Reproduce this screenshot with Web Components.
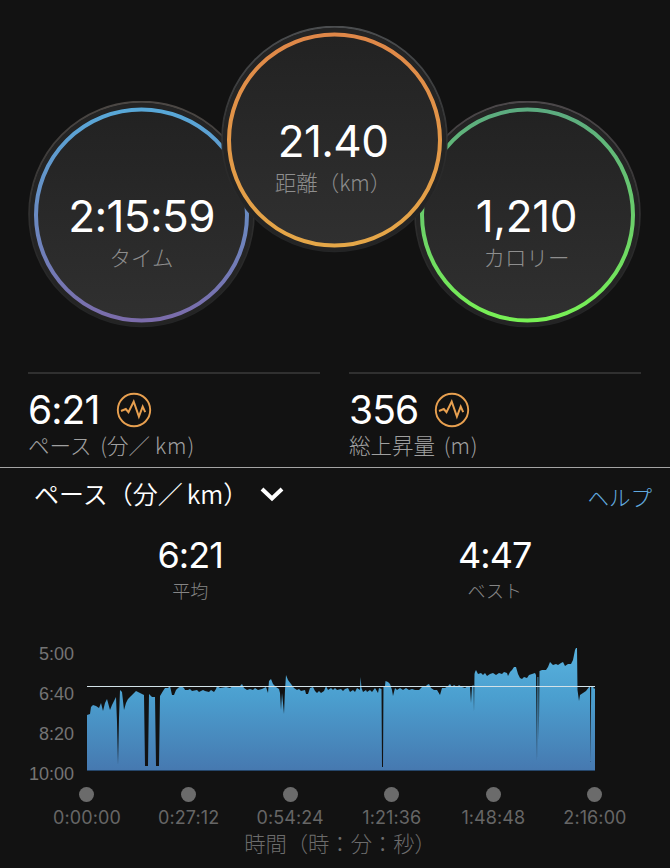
<!DOCTYPE html>
<html lang="ja">
<head>
<meta charset="utf-8">
<title>アクティビティ</title>
<style>
    body {
        margin: 0;
        background: #121212;
        color: #fff;
        font-family: Inter, "Noto Sans CJK JP", sans-serif;
    }
</style>
</head>
<body>
<activity-page></activity-page>

<script>
// shared helper: attach an open root and fill it
function render(el, html) {
    const shadow = el.attachShadow({mode: 'open'});
    const template = document.createElement('template');
    template.innerHTML = html;
    shadow.append(template.content.cloneNode(true));
}

class StatDial extends HTMLElement {
    connectedCallback() {
        const from = this.getAttribute('data-from');
        const to = this.getAttribute('data-to');
        const rim = this.getAttribute('data-rim');
        render(this, `
<style>
    :host{
        display:grid;
        width:227px;
        height:227px;
        flex:none;
    }
    svg, .content{grid-area:1 / 1;}
    .content{
        display:flex;
        flex-direction:column;
        align-items:center;
        padding:90px var(--nudge, 0) 0 0;
        z-index:1;
    }
    .value{
        font-size:44px;
        font-weight:385;
        line-height:50px;
        letter-spacing:var(--value-spacing, -0.6px);
        white-space:nowrap;
    }
    .label{
        font-family:"Noto Sans CJK JP", sans-serif;
        font-weight:300;
        font-size:21.5px;
        line-height:30px;
        margin-top:1px;
        color:#8e8e8e;
        white-space:nowrap;
    }
</style>
<svg width="227" height="227" viewBox="0 0 227 227">
    <defs>
        <linearGradient id="ring" x1="0" y1="0" x2="0" y2="1">
            <stop offset="0" stop-color="${from}"/>
            <stop offset="1" stop-color="${to}"/>
        </linearGradient>
        <linearGradient id="rim" x1="0" y1="0" x2="0" y2="1">
            <stop offset="0" stop-color="${rim}"/>
            <stop offset=".6" stop-color="#2b2b2b"/>
            <stop offset="1" stop-color="#242526"/>
        </linearGradient>
        <linearGradient id="face" x1="0" y1="0" x2="0" y2="1">
            <stop offset="0" stop-color="#222"/>
            <stop offset="1" stop-color="#303030"/>
        </linearGradient>
    </defs>
    <circle cx="113.5" cy="113" r="112.3" fill="#202122" stroke="url(#rim)" stroke-width="2"/>
    <circle cx="113.5" cy="113.5" r="109.5" fill="none" stroke="#242424" stroke-width="4"/>
    <circle cx="113.5" cy="114" r="105.5" fill="url(#face)" stroke="url(#ring)" stroke-width="4"/>
</svg>
<div class="content">
    <div class="value"><slot name="value"></slot></div>
    <div class="label"><slot></slot></div>
</div>
`);
    }
}

class PulseIcon extends HTMLElement {
    connectedCallback() {
        render(this, `
<style>
    :host{display:block;width:36px;height:36px;}
    svg{display:block;}
</style>
<svg width="36" height="36" viewBox="0 0 36 36" fill="none" stroke="#e8a050">
    <circle cx="18" cy="18" r="16.2" stroke-width="1.9"/>
    <path d="M5 19 L9.8 17 L12.5 20.2 L17.7 9.5 L22.9 24.6 L26.7 14.7 L29.2 20.2" stroke-width="2"/>
</svg>
`);
    }
}

class MetricItem extends HTMLElement {
    connectedCallback() {
        render(this, `
<style>
    :host{
        display:block;
        flex:1;
        border-top:2px solid #303030;
        height:95px;
        box-sizing:border-box;
        white-space:nowrap;
    }
    .row{
        display:flex;
        align-items:center;
        height:46px;
        margin-top:13px;
    }
    .value{
        width:var(--value-width);
        font-size:39px;
        font-weight:385;
        line-height:46px;
        letter-spacing:-0.9px;
    }
    .label{
        font-family:"Noto Sans CJK JP", sans-serif;
        font-weight:300;
        font-size:21.5px;
        line-height:28px;
        margin-top:-2px;
        word-spacing:4px;
        color:#a0a0a0;
    }
</style>
<div class="row">
    <div class="value"><slot name="value"></slot></div>
    <pulse-icon></pulse-icon>
</div>
<div class="label"><slot></slot></div>
`);
    }
}

class SummaryValue extends HTMLElement {
    connectedCallback() {
        render(this, `
<style>
    :host{
        display:flex;
        flex-direction:column;
        align-items:center;
        flex:1;
    }
    .value{
        font-size:36px;
        font-weight:385;
        line-height:44px;
        letter-spacing:-0.9px;
    }
    .label{
        font-family:"Noto Sans CJK JP", sans-serif;
        font-weight:300;
        font-size:18px;
        line-height:26px;
        color:#858585;
    }
</style>
<div class="value"><slot name="value"></slot></div>
<div class="label"><slot></slot></div>
`);
    }
}

class PaceChart extends HTMLElement {
    connectedCallback() {
        const ticks = this.getAttribute('data-ticks').split(' ');
        const levels = this.getAttribute('data-levels').split(' ');
        // x,y pairs of the pace curve
        const curve = `87,715 90,714 91,707 93,705 96,706 99,708 101,703 103,711 105,703 107,699
            110,710 112,705 114,701 116,697 117,722 118,765 119,718 120,690 122,692 124,710 126,703
            128,699 131,696 136,691 140,693 144,695 145,766 148,766 149,694 152,697 155,697 156,766
            159,766 160,696 163,691 165,688 168,688 170,686 172,695 174,695 176,690 178,688 181,686
            184,688 185,690 188,690 190,689 192,691 197,690 199,692 203,690 205,691 209,692 211,690
            214,692 216,689 217,686 220,688 226,687 230,688 233,686 236,687 239,687 242,684 244,688
            247,690 250,689 253,690 255,688 258,690 262,689 266,687 268,693 269,681 271,679 273,684
            276,687 279,689 280,693 281,710 282,693 283,703 284,714 285,690 286,675 288,680 291,684
            294,688 297,690 299,689 301,691 305,690 306,694 308,694 310,688 313,687 315,691 317,693
            319,691 321,693 324,691 326,686 328,690 331,688 333,690 335,688 337,690 341,689 343,691
            345,689 348,688 350,692 353,690 355,692 357,688 360,690 360.5,677 361.5,688 363,692
            366,690 367,692 370,690 372,692 375,688 378,693 379,688 381.5,689 382,767 383,767
            383.5,686 385,686 385.5,681 388,682 390,684 392,690 393,696 395,688 397,690 400,688
            403,690 406,688 409,690 412,689 415,690 419,690 422,687 425,687 427,685 429,684 431,688
            434,690 437,690 440,695 442,688 445,688 448,686 450,684 452,687 454,685 457,687 459,685
            462,687 465,688 468,686 470,687 471,703 472,686 473.5,685 474,712 474.5,674 475,672
            476,670 478,674 481,673 483,675 485,673 487,676 490,674 493,673 496,675 499,673 502,674
            504,672 507,673 508,676 510,672 512,670 514,667 516,667 518,674 520,678 522,679 524,677
            527,678 529,675 532,674 535,673 536,675 537,762 537.5,677 538.3,677 538.8,740 539.5,671
            542,670 546,670 548,667 550,662 553,665 556,664 558,665 561,663 563,662 565,666 568,664
            571,664 573,660 574,655 575,650 576,648 577,648 577.5,690 579,701 580,695 583,693
            586,691 589,687 590,687 590.5,762 591.2,687 593,686 594,689 595,688`;
        render(this, `
<style>
    :host{display:block;}
    .plot{
        display:grid;
        grid-template-columns:74px 508px;
        column-gap:13px;
    }
    .levels{
        display:flex;
        flex-direction:column;
        justify-content:space-between;
        height:140px;
        margin-top:4px;
        text-align:right;
        font:18px/20px "Liberation Sans", sans-serif;
        color:#747474;
    }
    svg{display:block;}
    .ticks{
        display:grid;
        grid-template-columns:repeat(6, 101.6px);
        margin:3px 0 0 36.2px;
        justify-items:center;
    }
    .tick{
        display:flex;
        flex-direction:column;
        align-items:center;
        font-size:18px;
        line-height:22px;
        letter-spacing:.1px;
        color:#666;
    }
    .tick::before{
        content:"";
        width:15px;
        height:15px;
        margin-bottom:5px;
        border-radius:50%;
        background:#6b6b6b;
    }
    .caption{
        padding-left:10px;
        text-align:center;
        font-family:"Noto Sans CJK JP", sans-serif;
        font-weight:300;
        font-size:21.3px;
        line-height:28px;
        color:#6c6c6c;
    }
</style>
<div class="plot">
    <div class="levels">${levels.map(l => `<span>${l}</span>`).join('')}</div>
    <svg width="508" height="131" viewBox="87 640 508 131">
        <defs>
            <linearGradient id="fill" gradientUnits="userSpaceOnUse" x1="0" y1="648" x2="0" y2="770">
                <stop offset="0" stop-color="#58b2de"/>
                <stop offset=".4" stop-color="#4b9fcf"/>
                <stop offset="1" stop-color="#4679b0"/>
            </linearGradient>
        </defs>
        <polygon points="87,770 ${curve} 595,770" fill="url(#fill)"/>
        <path d="M87 770.5H595" stroke="#25466a"/>
        <path d="M87 686.5H595" stroke="#d3e2e8" stroke-width="1.2"/>
    </svg>
</div>
<div class="ticks">${ticks.map(t => `<div class="tick">${t}</div>`).join('')}</div>
<div class="caption"><slot></slot></div>
`);
    }
}

class ActivityPage extends HTMLElement {
    connectedCallback() {
        render(this, `
<style>
    :host{
        display:block;
        width:670px;
        height:868px;
        overflow:hidden;
    }
    .dials{
        display:flex;
        align-items:flex-end;
        height:302px;
        padding:26px 0 0 28px;
    }
    stat-dial + stat-dial{margin-left:-34px;}
    .raised{z-index:1;align-self:flex-start;}
    .metrics{
        display:flex;
        gap:29px;
        padding:0 29px 0 28px;
        margin-top:44px;
        border-bottom:1px solid #a4a4a4;
    }
    .unit{margin-left:var(--unit-gap, 0);letter-spacing:.9px;}
    .heading{
        display:flex;
        align-items:center;
        height:52px;
        padding:0 18px 0 34px;
        font-family:"Noto Sans CJK JP", sans-serif;
        white-space:nowrap;
    }
    .heading h2{
        margin:0;
        font-size:25px;
        font-weight:350;
        line-height:34px;
        padding-bottom:2px;
    }
    .heading svg{margin-left:12px;}
    .heading a{
        margin-left:auto;
        padding-top:4px;
        font-size:21.5px;
        font-weight:300;
        color:#61a9df;
    }
    .summary{
        display:flex;
        width:609px;
        margin:13px 0 0 38px;
    }
    pace-chart{margin-top:37px;}
</style>
<div class="dials">
    <stat-dial data-from="#58a8d8" data-to="#7b6cab" data-rim="#4c4845"><span slot="value">2:15:59</span>タイム</stat-dial>
    <stat-dial class="raised" style="--nudge:3px" data-from="#df8748" data-to="#e5a748" data-rim="#4b4d4f"><span slot="value">21.40</span>距離（km）</stat-dial>
    <stat-dial style="--nudge:2px;--value-spacing:-0.3px" data-from="#5cab80" data-to="#78f155" data-rim="#4c484a"><span slot="value">1,210</span>カロリー</stat-dial>
</div>
<div class="metrics">
    <metric-item style="--value-width:88px;--unit-gap:5px"><span slot="value">6:21</span>ペース (分／<span class="unit">km)</span></metric-item>
    <metric-item style="--value-width:85px"><span slot="value">356</span>総上昇量 (<span class="unit">m)</span></metric-item>
</div>
<div class="heading">
    <h2>ペース（分／<span style="margin-left:4px">km</span>）</h2>
    <svg width="24" height="16" viewBox="0 0 24 16" fill="none" stroke="#fff" stroke-width="4"><path d="M2 3 L12 12.5 L22 3"/></svg>
    <a>ヘルプ</a>
</div>
<div class="summary">
    <summary-value><span slot="value">6:21</span>平均</summary-value>
    <summary-value><span slot="value">4:47</span>ベスト</summary-value>
</div>
<pace-chart data-levels="5:00 6:40 8:20 10:00" data-ticks="0:00:00 0:27:12 0:54:24 1:21:36 1:48:48 2:16:00">時間（時：分：秒）</pace-chart>
`);
    }
}

customElements.define('stat-dial', StatDial);
customElements.define('pulse-icon', PulseIcon);
customElements.define('metric-item', MetricItem);
customElements.define('summary-value', SummaryValue);
customElements.define('pace-chart', PaceChart);
customElements.define('activity-page', ActivityPage);
</script>
</body>
</html>
